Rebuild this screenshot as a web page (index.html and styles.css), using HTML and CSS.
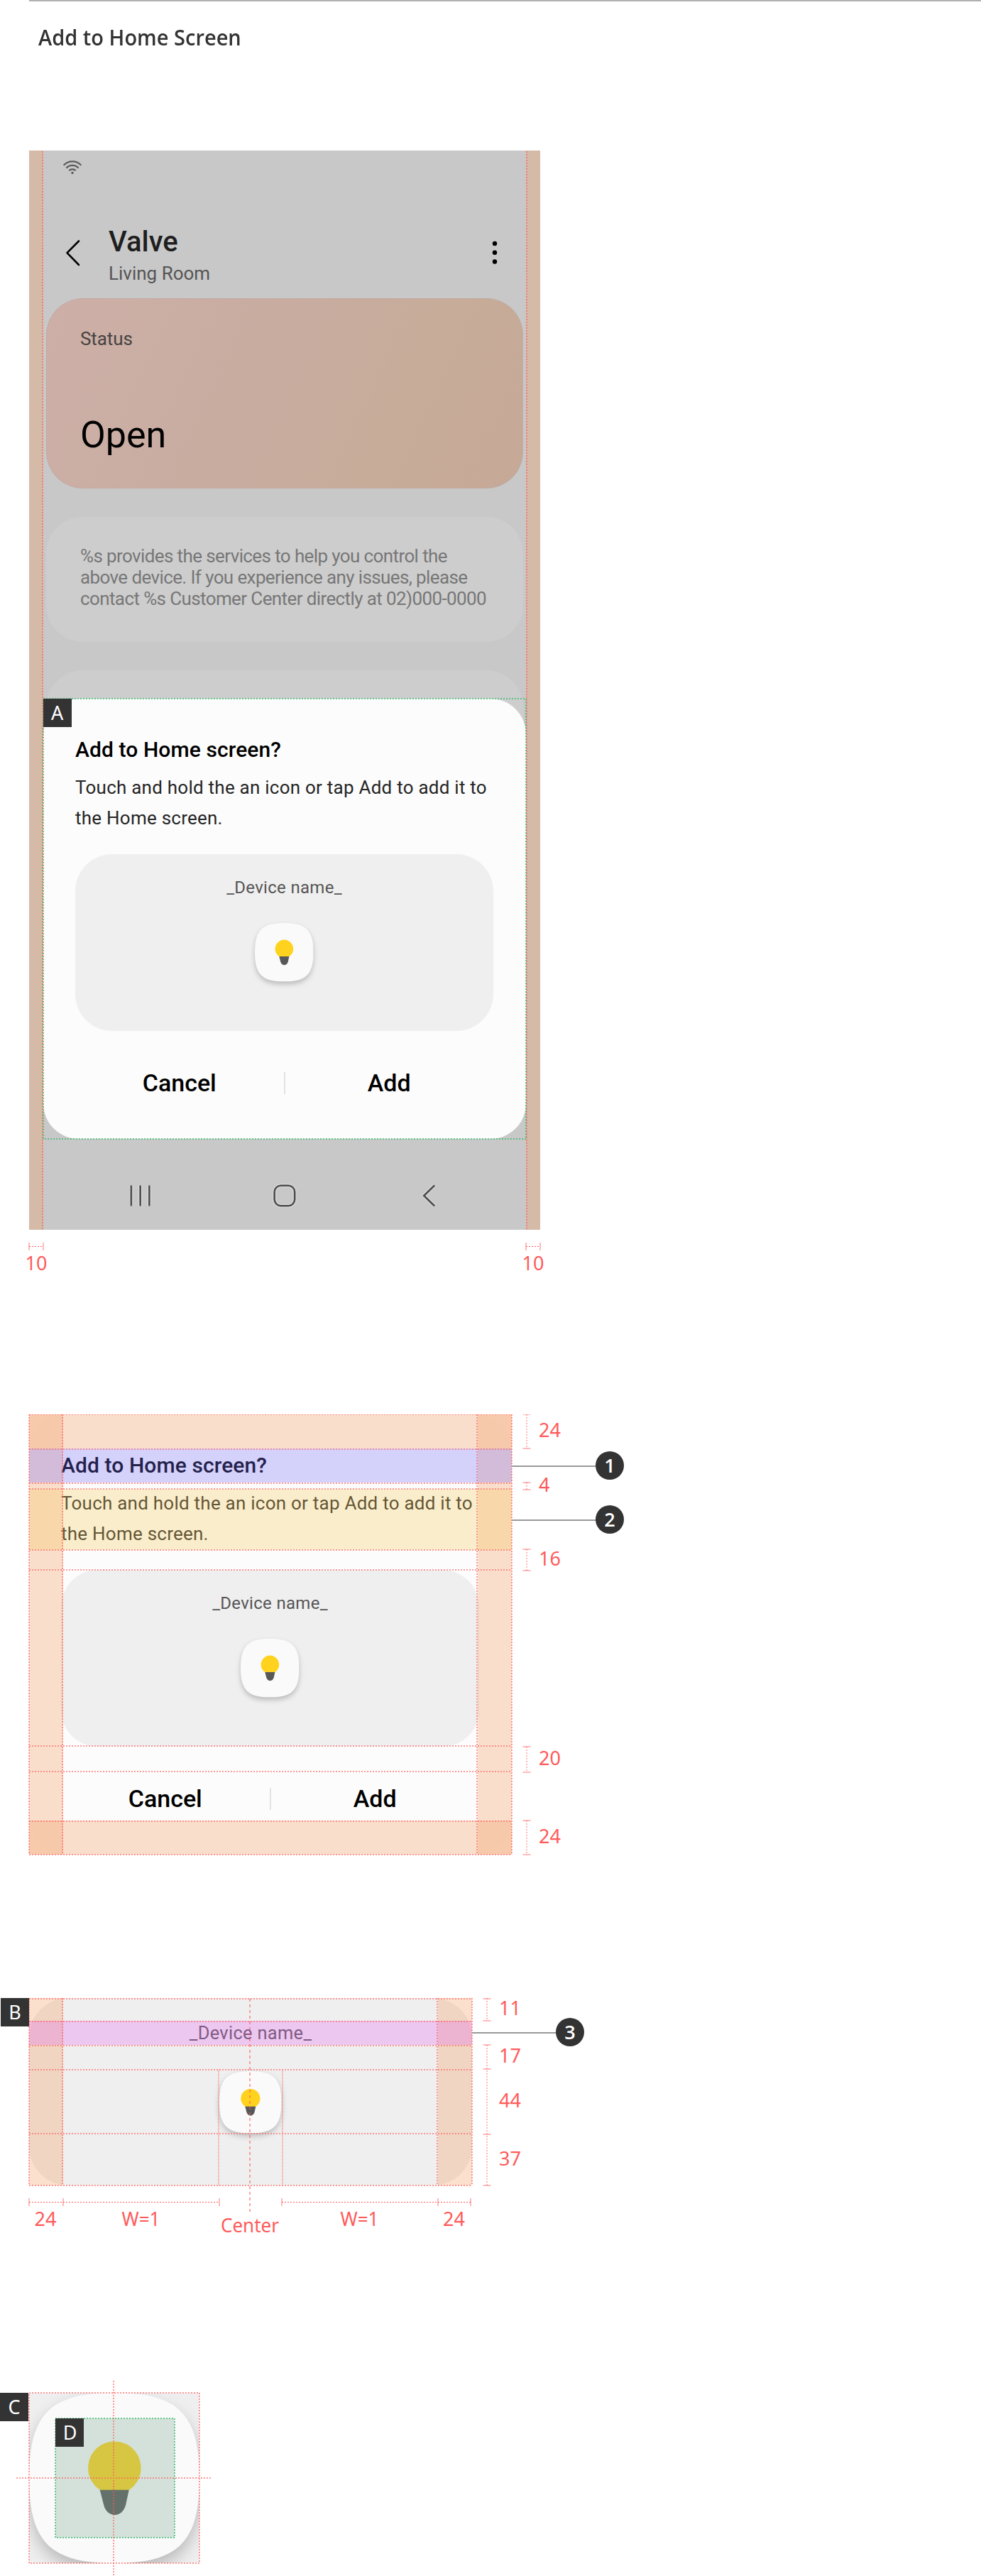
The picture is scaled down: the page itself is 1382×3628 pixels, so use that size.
FILE: index.html
```html
<!DOCTYPE html>
<html lang="en">
<head>
<meta charset="utf-8">
<title>Add to Home Screen</title>
<link rel="stylesheet" href="styles.css">
</head>
<body>
<svg class="defs" width="0" height="0" aria-hidden="true">
  <symbol id="squircle" viewBox="0 0 240 240"><path fill="#fafafa" d="M0 120C0 30 30 0 120 0S240 30 240 120 210 240 120 240 0 210 0 120Z"/></symbol>
  <symbol id="bulb" viewBox="0 0 240 240">
    <path fill="#ffd21e" d="M100 137A37.3 37.3 0 1 1 140.700 137Z"/>
    <path fill="#585858" d="M99.700 136.700H140.700L136 158.500C133.500 167 127.500 172 120.700 172S107.500 167 105.300 158.500Z"/>
  </symbol>
</svg>

<header class="page-head"><h1>Add to Home Screen</h1></header>

<section class="spec spec-phone">
  <div class="phone">
    <div class="statusbar">
      <svg width="28" height="22" viewBox="88 225 28 22" fill="none" stroke="#5c5c5c" stroke-width="2.200">
        <path d="M89.700 232.700a17 17 0 0 1 24.600 0M93.500 236.700a11.500 11.500 0 0 1 17 0M97.300 240.300a6.500 6.500 0 0 1 9.400 0"/><circle cx="102" cy="243.500" r="1.700" fill="#5c5c5c" stroke="none"/>
      </svg>
    </div>
    <div class="appbar">
      <svg class="back" width="24" height="40" viewBox="0 0 24 40"><path d="M20 3.500L3.500 20.200 20 37" fill="none" stroke="#000" stroke-width="2.600" stroke-linecap="round" stroke-linejoin="round"/></svg>
      <div class="appbar-text"><div class="device">Valve</div><div class="room">Living Room</div></div>
      <svg class="more" width="8" height="36" viewBox="0 0 8 36"><circle cx="4" cy="5" r="3.200"/><circle cx="4" cy="17.800" r="3.200"/><circle cx="4" cy="30.500" r="3.200"/></svg>
    </div>
    <div class="tile tile-status"><div class="tile-label">Status</div><div class="tile-value">Open</div></div>
    <div class="tile tile-info">%s provides the services to help you control the<br>above device. If you experience any issues, please<br>contact %s Customer Center directly at 02)000-0000</div>
    <div class="tile tile-empty"></div>
    <div class="navbar">
      <svg width="40" height="40" viewBox="0 0 40 40"><path class="halo" d="M7.200 5.500v29M20 5.500v29M32.700 5.500v29"/><path class="glyph" d="M7.200 5.500v29M20 5.500v29M32.700 5.500v29"/></svg>
      <svg width="40" height="40" viewBox="0 0 40 40"><rect class="halo" x="6" y="5.800" width="28.500" height="28.500" rx="9"/><rect class="glyph" x="6" y="5.800" width="28.500" height="28.500" rx="9"/></svg>
      <svg width="40" height="40" viewBox="0 0 40 40"><path class="halo" d="M27.500 5.500L12.500 20l15 14.500"/><path class="glyph" d="M27.500 5.500L12.500 20l15 14.500"/></svg>
    </div>
    <div class="dialog dialog-over">
      <h2>Add to Home screen?</h2>
      <p>Touch and hold the an icon or tap Add to add it to<br>the Home screen.</p>
      <div class="widget"><span class="widget-name">_Device name_</span><svg class="app-icon" viewBox="0 0 240 240"><use class="base" href="#squircle"/><use href="#bulb"/></svg></div>
      <div class="actions"><span>Cancel</span><b></b><span>Add</span></div>
    </div>
  </div>
  <svg class="redline" width="900" height="1600" viewBox="0 212 900 1600">
    <path class="tint" d="M41 212h20v1520h-20zM741 212h20v1520h-20z"/>
    <path class="red2" d="M60 213V1732M742 213V1732"/>
    <path class="green" d="M61 984H741V1604H61Z"/>
    <path class="red1" d="M41 1755.500H61M741 1755.500H761"/>
    <path class="tick" d="M41 1750v11M61 1750v11M741 1750v11M761 1750v11"/>
    <text class="dim mid" x="51" y="1789">10</text><text class="dim mid" x="751" y="1789">10</text>
    <path class="badge" d="M61 984h40v40h-40z"/><text class="tag" x="80.700" y="1013.500">A</text>
  </svg>
</section>

<section class="spec spec-dialog">
  <div class="dialog">
    <h2>Add to Home screen?</h2>
    <p>Touch and hold the an icon or tap Add to add it to<br>the Home screen.</p>
    <div class="widget"><span class="widget-name">_Device name_</span><svg class="app-icon" viewBox="0 0 240 240"><use class="base" href="#squircle"/><use href="#bulb"/></svg></div>
    <div class="actions"><span>Cancel</span><b></b><span>Add</span></div>
  </div>
  <svg class="redline" width="900" height="630" viewBox="0 1992 900 630">
    <path class="tint" d="M41 1992h48v620h-48zM673 1992h48v620h-48z"/>
    <path class="tint" d="M41 1992h680v48h-680zM41 2564h680v48h-680z"/>
    <path class="violet" d="M41 2040h680v48h-680z"/>
    <path class="amber" d="M41 2097h680v86h-680z"/>
    <path class="red2" d="M41 1992H721M41 2041H721M41 2089H721M41 2097H721M41 2183H721M41 2211H721M41 2459H721M41 2495H721M41 2565H721M41 2612H721"/>
    <path class="red2" d="M41 1992V2612M88 1992V2612M672 1992V2612M721 1992V2612"/>
    <path class="red2 light" d="M742 1992v48M742 2088v10M742 2182v30M742 2460v36M742 2564v48"/>
    <path class="tick" d="M736.500 1992h11M736.500 2040h11M736.500 2088h11M736.500 2098h11M736.500 2182h11M736.500 2212h11M736.500 2460h11M736.500 2496h11M736.500 2564h11M736.500 2612h11"/>
    <text class="dim" x="759" y="2024">24</text><text class="dim" x="759" y="2101">4</text><text class="dim" x="759" y="2205">16</text><text class="dim" x="759" y="2486">20</text><text class="dim" x="759" y="2596">24</text>
    <path class="leader" d="M721 2065H841M721 2141H841"/>
    <circle class="badge" cx="859" cy="2064" r="20"/><circle class="badge" cx="859" cy="2140" r="20"/>
    <text class="tag num" x="859" y="2074">1</text><text class="tag num" x="859" y="2150">2</text>
  </svg>
</section>

<section class="spec spec-widget">
  <div class="widget"><span class="widget-name">_Device name_</span><svg class="app-icon" viewBox="0 0 240 240"><use class="base" href="#squircle"/><use href="#bulb"/></svg></div>
  <svg class="redline" width="900" height="346" viewBox="0 2814 900 346">
    <path class="tint" d="M41 2814h48v264h-48zM617 2814h48v264h-48z"/>
    <path class="pink" d="M41 2846h624v34h-624z"/>
    <path class="red2" d="M41 2815H665M41 2847H665M41 2881H665M41 2915H665M41 3005H665M41 3078H665"/>
    <path class="red2" d="M41 2814V3078M88 2814V3078M616 2814V3078M665 2814V3078"/>
    <path class="fine" d="M308 2915V3079M398 2915V3079"/>
    <path class="center" d="M352 2815V3115"/>
    <path class="red2 light" d="M686 2814v32M686 2880V3078"/>
    <path class="tick" d="M680.500 2815h11M680.500 2846h11M680.500 2880h11M680.500 2914h11M680.500 3006h11M680.500 3078h11"/>
    <path class="red1" d="M41 3101.500H309M397 3101.500H663"/>
    <path class="tick" d="M41 3096v11M89 3096v11M309 3096v11M397 3096v11M617 3096v11M663 3096v11"/>
    <text class="dim" x="703" y="2838">11</text><text class="dim" x="703" y="2905">17</text><text class="dim" x="703" y="2968">44</text><text class="dim" x="703" y="3050">37</text>
    <text class="dim mid" x="64" y="3135">24</text><text class="dim mid" x="198.500" y="3135" textLength="54" lengthAdjust="spacingAndGlyphs">W=1</text><text class="dim mid" x="352" y="3144" textLength="82" lengthAdjust="spacingAndGlyphs">Center</text><text class="dim mid" x="506.500" y="3135" textLength="54" lengthAdjust="spacingAndGlyphs">W=1</text><text class="dim mid" x="639.500" y="3135">24</text>
    <path class="leader" d="M665 2863H785"/><circle class="badge" cx="803" cy="2862" r="20"/><text class="tag num" x="803" y="2872">3</text>
    <path class="badge" d="M1 2814h40v40h-40z"/><text class="tag" x="21" y="2844">B</text>
  </svg>
</section>

<section class="spec spec-icon">
  <div class="icon-frame"><svg class="app-icon" viewBox="0 0 240 240"><use class="base" href="#squircle"/><use href="#bulb"/></svg></div>
  <svg class="redline" width="400" height="278" viewBox="0 3350 400 278">
    <path class="mint" d="M78 3406h168v168h-168z"/>
    <path class="green" d="M78 3406h168v168h-168z"/>
    <path class="red2" d="M41 3370h240v240h-240z"/>
    <path class="red2" d="M160 3353V3628M23 3490H297"/>
    <path class="badge" d="M0 3370h40v40h-40zM78 3406h40v40h-40z"/>
    <text class="tag" x="20" y="3400">C</text><text class="tag" x="98.500" y="3436">D</text>
  </svg>
</section>
</body>
</html>
```
FILE: styles.css
```css
* { box-sizing: border-box; }
body { margin: 0; background: #fff; font-family: Roboto, "Liberation Sans", sans-serif; width: 1382px; height: 3628px; position: relative; overflow: hidden; }
svg { display: block; }
.defs { position: absolute; }

.page-head { margin-left: 41px; height: 212px; border-top: 2px solid #b0b0b0; padding: 28px 0 0 13px; }
.page-head h1 { display: inline-block; margin: 0; font: 600 31px/44px "Open Sans", "Noto Sans", sans-serif; color: #333; white-space: nowrap; transform: scaleX(.936); transform-origin: 0 50%; }

.spec { position: relative; padding-left: 41px; }
.spec-phone { height: 1780px; }
.spec-dialog { height: 822px; }
.spec-widget { height: 536px; }
.spec-icon { height: 278px; padding-top: 20px; overflow: hidden; }

.phone { position: relative; display: flex; flex-direction: column; width: 720px; height: 1520px; padding: 0 24px; background: #c8c8c8; overflow: hidden; }
.statusbar { height: 104px; padding: 13px 0 0 23px; }
.appbar { display: flex; height: 104px; padding: 0 36px 0 26px; }
.back { margin-top: 20px; }
.appbar-text { flex: 1; margin-left: 38px; }
.device { font-size: 40px; line-height: 50px; font-weight: 500; color: #1e1e1e; }
.room { margin-top: 3px; font-size: 26px; line-height: 32px; color: #555; }
.more { margin-top: 22px; }

.tile { flex: none; border-radius: 52px; background: #cdcdcd; padding: 40px 48px 0; white-space: nowrap; }
.tile-status { height: 268px; background: linear-gradient(115deg, #cdafa7 0%, #c8aca0 45%, #c7ac99 75%, #c6a897 100%); border: 1px solid rgba(190, 170, 165, .6); padding-left: 47px; }
.tile-label { font-size: 26px; line-height: 32px; letter-spacing: -.1px; color: #474341; }
.tile-value { margin-top: 90px; font-size: 52px; line-height: 60px; color: #000; }
.tile-info { margin-top: 40px; height: 176px; font-size: 26px; line-height: 30px; letter-spacing: -.61px; color: #777; }
.tile-empty { margin-top: 40px; height: 400px; }

.navbar { display: flex; height: 128px; margin-top: auto; padding: 60px 31px 0; }
.navbar svg { flex: 1; }
.glyph { fill: none; stroke: #4d4d4d; stroke-width: 2.6; }
.halo { fill: none; stroke: #dcdcdc; stroke-width: 5; }

.dialog { display: flex; flex-direction: column; width: 680px; height: 620px; padding: 52px 46px 0 45px; border-radius: 50px; background: #fcfcfc; }
.dialog-over { position: absolute; left: 20px; top: 772px; }
.dialog h2 { margin: 0; font-size: 30px; line-height: 40px; font-weight: 500; letter-spacing: .1px; color: #000; white-space: nowrap; }
.dialog p { margin: 12px 0 29px; font-size: 26px; line-height: 43px; letter-spacing: .24px; color: #252525; white-space: nowrap; }
.actions { display: flex; align-items: center; height: 46px; margin-top: 50px; font-size: 34px; line-height: 46px; font-weight: 500; }
.actions span { flex: 1; text-align: center; }
.actions b { width: 2px; height: 31px; background: #e3e3e3; }

.widget { display: flex; flex-direction: column; align-items: center; width: 24.54em; height: 10.375em; padding-top: 1.3125em; border-radius: 2.167em; background: #efefef; font-size: 24px; flex: none; }
.widget-name { line-height: 1.333em; letter-spacing: .0125em; color: #555; }
.app-icon { width: 3.44em; height: 3.44em; overflow: visible; }
.widget .app-icon { margin-top: 1.396em; }
.app-icon .base { filter: drop-shadow(0 11px 11px rgba(0, 0, 0, .22)); }
.spec-widget .widget { font-size: 25.43px; }

.icon-frame { width: 240px; height: 240px; background: #efefef; overflow: hidden; }
.icon-frame .app-icon { width: 240px; height: 240px; }

.redline { position: absolute; left: 0; top: 0; }
.redline path { fill: none; }
.redline .tint { fill: rgba(242, 155, 97, .31); }
.redline .violet { fill: rgba(118, 108, 250, .3); }
.redline .amber { fill: rgba(246, 203, 93, .3); }
.redline .pink { fill: rgba(230, 107, 240, .3); }
.redline .mint { fill: rgba(125, 172, 147, .31); }
.red2 { stroke: rgba(255, 90, 90, .6); stroke-width: 2; stroke-dasharray: 2 2; }
.light { stroke: rgba(255, 90, 90, .42); }
.fine { stroke: rgba(255, 90, 90, .55); stroke-width: 2; stroke-dasharray: 1 1; }
.red1 { stroke: #ff5a5a; stroke-width: 1; stroke-dasharray: 2 2; }
.center { stroke: rgba(255, 90, 90, .55); stroke-width: 2; stroke-dasharray: 4 4; }
.green { stroke: rgba(60, 185, 115, .75); stroke-width: 2; stroke-dasharray: 2 2; }
.tick { stroke: rgba(255, 90, 90, .42); stroke-width: 2; }
.leader { stroke: #999; stroke-width: 2; }
.redline .badge { fill: #333; }
.dim { font: 400 27px "Noto Sans", sans-serif; fill: #ff5a5a; }
.mid, .tag { text-anchor: middle; }
.tag { font: 400 27px "Noto Sans", sans-serif; fill: #fff; }
.num { font-family: "Open Sans", "Noto Sans", sans-serif; font-weight: 600; }
```
